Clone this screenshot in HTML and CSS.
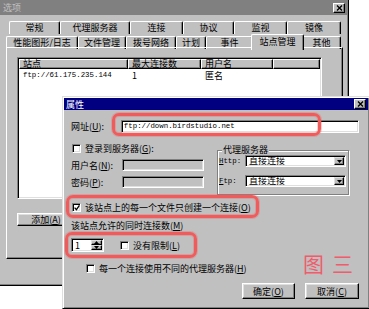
FILE: index.html
```html
<!DOCTYPE html>
<html lang="zh-CN">
<head>
    <meta charset="UTF-8">
    <title>选项</title>
    <link rel="stylesheet" href="styles.css">
</head>
<body>
    <div class="win win-back">
        <div class="caption caption-off">
            <span>选项</span>
            <span class="cap-btn"><svg width="7" height="6" viewBox="0 0 7 6"><path d="M1 0.5l5 5M6 0.5l-5 5" stroke="#000" stroke-width="1.4"/></svg></span>
        </div>
        <div class="tab-row tab-row-back">
            <div class="tab">常规</div>
            <div class="tab">代理服务器</div>
            <div class="tab">连接</div>
            <div class="tab">协议</div>
            <div class="tab">监视</div>
            <div class="tab">镜像</div>
        </div>
        <div class="tab-row tab-row-front">
            <div class="tab">性能图形/日志</div>
            <div class="tab">文件管理</div>
            <div class="tab">拨号网络</div>
            <div class="tab">计划</div>
            <div class="tab">事件</div>
            <div class="tab active">站点管理</div>
            <div class="tab">其他</div>
        </div>
        <div class="panel">
            <div class="list">
                <div class="list-head">
                    <span>站点</span>
                    <span>最大连接数</span>
                    <span>用户名</span>
                    <span></span>
                </div>
                <div class="list-row">
                    <span class="mono">ftp://61.175.235.144</span>
                    <span>1</span>
                    <span>匿名</span>
                </div>
            </div>
            <button class="btn btn-add">添加(<u>A</u>)</button>
        </div>
    </div>

    <div class="win win-front">
        <div class="caption caption-on">
            <span>属性</span>
            <span class="cap-btn"><svg width="7" height="6" viewBox="0 0 7 6"><path d="M1 0.5l5 5M6 0.5l-5 5" stroke="#000" stroke-width="1.4"/></svg></span>
        </div>
        <div class="dlg">
            <div class="row row-url">
                <span class="lbl-url">网址(<u>U</u>):</span>
                <div class="field url-field mono">ftp://down.birdstudio.net</div>
            </div>

            <div class="row-mid">
                <div class="login">
                    <div class="check-row">
                        <span class="check"></span>
                        <span>登录到服务器(<u>G</u>):</span>
                    </div>
                    <div class="row row-user">
                        <span class="lbl-user">用户名(<u>N</u>):</span>
                        <span class="field field-off"></span>
                    </div>
                    <div class="row row-pass">
                        <span class="lbl-user">密码(<u>P</u>):</span>
                        <span class="field field-off"></span>
                    </div>
                </div>
                <div class="group">
                    <span class="group-title">代理服务器</span>
                    <div class="proxy-row proxy-http">
                        <span class="proxy-lbl mono"><u>H</u>ttp:</span>
                        <div class="field select">
                            <span>直接连接</span>
                            <span class="drop"><svg width="5" height="3" viewBox="0 0 5 3"><path d="M0 0h5L2.5 3z" fill="#000"/></svg></span>
                        </div>
                    </div>
                    <div class="proxy-row proxy-ftp">
                        <span class="proxy-lbl mono"><u>F</u>tp:</span>
                        <div class="field select">
                            <span>直接连接</span>
                            <span class="drop"><svg width="5" height="3" viewBox="0 0 5 3"><path d="M0 0h5L2.5 3z" fill="#000"/></svg></span>
                        </div>
                    </div>
                </div>
            </div>

            <div class="check-row opt-single">
                <span class="check"><svg width="6" height="6" viewBox="0 0 6 6"><path d="M0.6 2.6l1.8 2 3-4.2" stroke="#000" stroke-width="1.3" fill="none"/></svg></span>
                <span>该站点上的每一个文件只创建一个连接(<u>O</u>)</span>
            </div>

            <div class="hint">该站点允许的同时连接数(<u>M</u>)</div>

            <div class="limit-row">
                <div class="field spin">
                    <span class="spin-val">1</span>
                    <span class="spin-btns">
                        <span class="spin-btn"><svg width="5" height="3" viewBox="0 0 5 3"><path d="M0 3h5L2.5 0z" fill="#000"/></svg></span>
                        <span class="spin-btn"><svg width="5" height="3" viewBox="0 0 5 3"><path d="M0 0h5L2.5 3z" fill="#000"/></svg></span>
                    </span>
                </div>
                <div class="check-row no-limit">
                    <span class="check"></span>
                    <span>没有限制(<u>L</u>)</span>
                </div>
            </div>

            <div class="check-row opt-proxy">
                <span class="check"></span>
                <span>每一个连接使用不同的代理服务器(<u>H</u>)</span>
            </div>

            <div class="actions">
                <button class="btn btn-ok">确定(<u>O</u>)</button>
                <button class="btn btn-cancel">取消(<u>C</u>)</button>
            </div>
        </div>
    </div>

    <div class="mark mark-url"></div>
    <div class="mark mark-single"></div>
    <div class="mark mark-limit"></div>
    <div class="stamp">图三</div>
</body>
</html>
```

FILE: styles.css
```css
* {
    box-sizing: border-box;
}
body {
    margin: 0;
    width: 369px;
    height: 309px;
    position: relative;
    overflow: hidden;
    background: #fff;
    font-family: "Noto Sans CJK SC", sans-serif;
    font-size: 9px;
    line-height: 11px;
    color: #000;
}
u {
    text-underline-offset: 1px;
}
.mono {
    font-family: "Liberation Mono", monospace;
    font-size: 7.4px;
}

/* windows */
.win {
    position: absolute;
    display: flex;
    flex-direction: column;
    background: #c0c0c0;
    border: 1px solid;
    border-color: #dfdfdf #000 #000 #dfdfdf;
    box-shadow: inset 1px 1px #fff, inset -1px -1px #808080;
    padding: 1px;
}
.win-back {
    left: -2px;
    top: -2px;
    width: 351px;
    height: 288px;
}
.win-front {
    left: 62px;
    top: 96px;
    width: 308px;
    height: 213px;
}
.caption {
    flex: none;
    display: flex;
    justify-content: space-between;
    align-items: center;
}
.caption-off {
    height: 15px;
    padding: 0 2px 0 3px;
    background: #808080;
    color: #c0c0c0;
}
.caption-on {
    height: 12px;
    padding: 0 2px 0 2px;
    background: #000080;
    color: #fff;
}
.cap-btn {
    width: 12px;
    height: 10px;
    display: flex;
    align-items: center;
    justify-content: center;
    background: #c0c0c0;
    border: 1px solid;
    border-color: #fff #000 #000 #fff;
    box-shadow: inset -1px -1px #808080;
}

/* tabs */
.tab-row {
    flex: none;
    display: grid;
    height: 13px;
    align-items: end;
}
.tab-row-back {
    margin: 6px 0 0 9px;
    grid-template-columns: 51px 70px 53px 51px 53px 54px;
}
.tab-row-front {
    margin-left: 6px;
    grid-template-columns: 72px 48px 50px 30px 47px 49px 39px;
}
.tab {
    height: 13px;
    border: 1px solid;
    border-bottom: 0;
    border-color: #fff #000 #000 #fff;
    border-radius: 2px 2px 0 0;
    box-shadow: inset -1px 0 #808080;
    text-align: center;
    line-height: 12px;
    white-space: nowrap;
}
.tab.active {
    position: relative;
    z-index: 1;
    height: 16px;
    margin: 0 -2px -1px;
    background: #c0c0c0;
    line-height: 14px;
}
.panel {
    flex: none;
    margin-left: 6px;
    width: 337px;
    height: 212px;
    border: 1px solid;
    border-color: #fff #000 #000 #fff;
    box-shadow: inset -1px -1px #808080;
    padding: 9px 0 0 10px;
}

/* list view */
.list {
    width: 305px;
    height: 142px;
    background: #fff;
    border: 1px solid;
    border-color: #808080 #fff #fff #808080;
    box-shadow: inset 1px 1px #000, inset -1px -1px #dfdfdf;
    padding: 1px;
}
.list-head,
.list-row {
    display: grid;
    grid-template-columns: 109px 73px 72px 1fr;
}
.list-head span {
    height: 10px;
    background: #c0c0c0;
    border: 1px solid;
    border-color: #fff #000 #000 #fff;
    box-shadow: inset -1px -1px #808080;
    padding-left: 3px;
    line-height: 8px;
}
.list-row {
    padding-top: 1px;
}
.list-row span {
    padding-left: 4px;
    line-height: 11px;
}

/* controls */
.btn {
    font: inherit;
    color: #000;
    background: #c0c0c0;
    border: 1px solid;
    border-color: #fff #000 #000 #fff;
    box-shadow: inset -1px -1px #808080, inset 1px 1px #dfdfdf;
    padding: 0;
    line-height: 11px;
}
.btn-add {
    margin-top: 14px;
    width: 58px;
    height: 13px;
}
.field {
    background: #fff;
    border: 1px solid;
    border-color: #808080 #fff #fff #808080;
    box-shadow: inset 1px 1px #000, inset -1px -1px #dfdfdf;
}
.field-off {
    width: 82px;
    height: 12px;
    background: #c0c0c0;
}
.check {
    flex: none;
    width: 9px;
    height: 9px;
    display: flex;
    align-items: center;
    justify-content: center;
    background: #fff;
    border: 1px solid;
    border-color: #808080 #fff #fff #808080;
    box-shadow: inset 1px 1px #000, inset -1px -1px #dfdfdf;
}
.check-row {
    display: flex;
    align-items: center;
    gap: 4px;
    height: 11px;
    padding-left: 1px;
    white-space: nowrap;
}

/* dialog body */
.dlg {
    flex: 1;
    display: flex;
    flex-direction: column;
    padding: 0 9px 0 7px;
}
.row {
    display: flex;
    align-items: center;
}
.row-url {
    margin-top: 10px;
    height: 13px;
}
.lbl-url {
    width: 50px;
}
.url-field {
    width: 239px;
    height: 13px;
    padding-left: 2px;
    line-height: 11px;
}
.row-mid {
    display: flex;
    align-items: flex-start;
    margin-top: 11px;
}
.login {
    width: 133px;
    display: flex;
    flex-direction: column;
}
.login .check-row {
    height: 9px;
}
.row-user {
    margin-top: 6px;
    height: 12px;
}
.row-pass {
    margin-top: 5px;
    height: 12px;
}
.lbl-user {
    width: 51px;
}
.group {
    margin: 6px 0 0 13px;
    width: 132px;
    height: 45px;
    display: flex;
    flex-direction: column;
    padding-left: 1px;
    border: 1px solid #808080;
    box-shadow: inset 1px 1px #fff, 1px 1px #fff;
}
.group-title {
    align-self: flex-start;
    margin: -6px 0 0 3px;
    padding: 0 1px;
    line-height: 9px;
    background: #c0c0c0;
}
.proxy-row {
    display: flex;
    align-items: center;
    height: 12px;
    margin-top: 1px;
}
.proxy-ftp {
    margin-top: 8px;
}
.proxy-lbl {
    width: 26px;
}
.select {
    width: 101px;
    height: 12px;
    display: flex;
    align-items: center;
    justify-content: space-between;
    padding: 1px 1px 1px 3px;
    line-height: 10px;
}
.drop {
    width: 10px;
    height: 100%;
    display: flex;
    align-items: center;
    justify-content: center;
    background: #c0c0c0;
    border: 1px solid;
    border-color: #dfdfdf #000 #000 #dfdfdf;
    box-shadow: inset -1px -1px #808080;
}
.opt-single {
    margin-top: 7px;
}
.hint {
    margin-top: 7px;
    height: 11px;
}
.limit-row {
    display: flex;
    align-items: center;
    margin-top: 7px;
    height: 14px;
}
.spin {
    width: 33px;
    height: 14px;
    display: flex;
    justify-content: space-between;
    padding: 1px;
}
.spin-val {
    padding-left: 2px;
    line-height: 12px;
}
.spin-btns {
    width: 11px;
    display: flex;
    flex-direction: column;
}
.spin-btn {
    flex: 1;
    display: flex;
    align-items: center;
    justify-content: center;
    background: #c0c0c0;
    border: 1px solid;
    border-color: #dfdfdf #000 #000 #dfdfdf;
    box-shadow: inset -1px -1px #808080;
}
.no-limit {
    margin-left: 15px;
}
.opt-proxy {
    margin-top: 11px;
    padding-left: 15px;
}
.actions {
    display: flex;
    justify-content: flex-end;
    gap: 10px;
    margin-top: 9px;
}
.btn-ok {
    width: 53px;
    height: 16px;
}
.btn-cancel {
    width: 54px;
    height: 16px;
}

/* red annotations drawn over the screenshot */
.mark {
    position: absolute;
    border: 3px solid #f05c5c;
    border-radius: 7px;
    box-shadow: 0 0 0 1px rgba(240, 92, 92, 0.3), inset 0 0 0 1px rgba(240, 92, 92, 0.3);
}
.mark-url {
    left: 112px;
    top: 113px;
    width: 209px;
    height: 23px;
}
.mark-single {
    left: 66px;
    top: 195px;
    width: 193px;
    height: 23px;
}
.mark-limit {
    left: 65px;
    top: 232px;
    width: 132px;
    height: 26px;
}
.stamp {
    position: absolute;
    left: 303px;
    top: 250px;
    font-size: 21px;
    line-height: 26px;
    letter-spacing: 8px;
    color: #f05c6c;
}
```
